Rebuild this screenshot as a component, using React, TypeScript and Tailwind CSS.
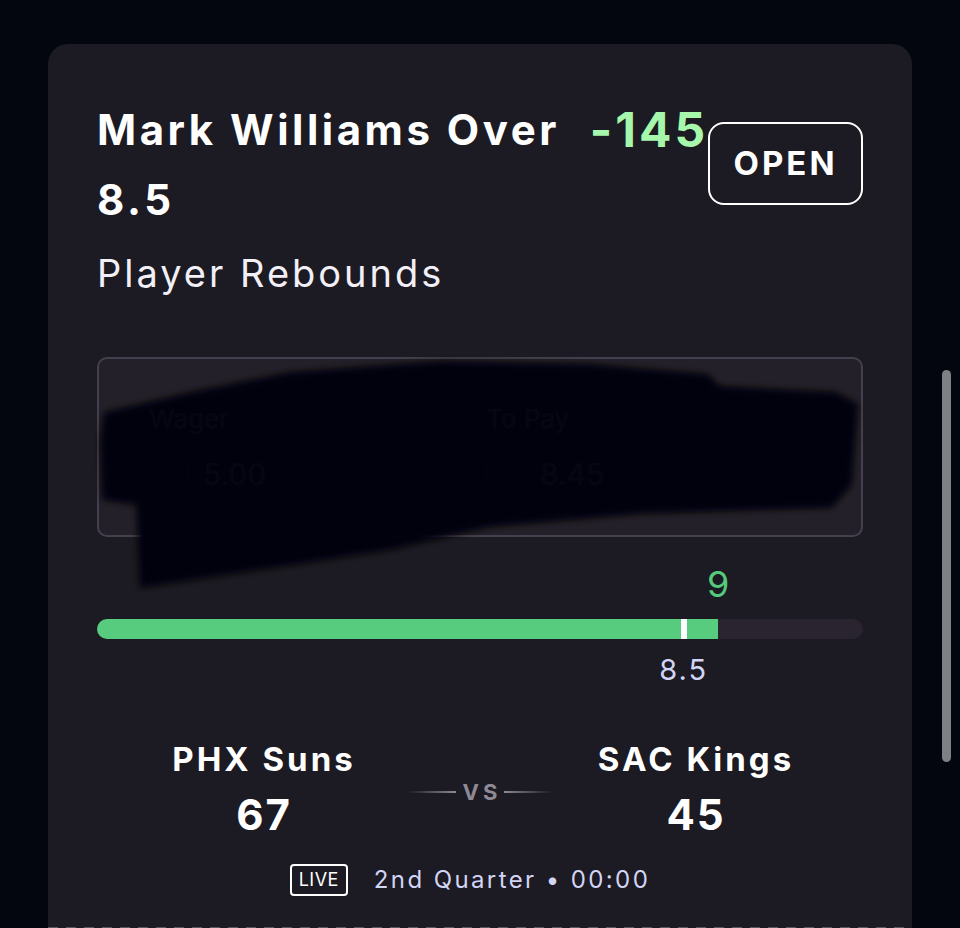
import React from "react"

const font = { fontFamily: "Inter, 'Noto Sans', sans-serif" }

type Team = { name: string; score: number }

const home: Team = { name: "PHX Suns", score: 67 }
const away: Team = { name: "SAC Kings", score: 45 }

const current = 9
const line = 8.5
const fillPct = 81.1
const linePct = 76.6

function TeamCol({ team }: { team: Team }) {
  return (
    <div className="flex flex-col items-center">
      <div className="text-[33px] leading-none font-bold text-white tracking-[3px]">{team.name}</div>
      <div className="mt-[18px] text-[42px] leading-none font-bold text-white tracking-[2px]">{team.score}</div>
    </div>
  )
}

function Scribble() {
  // redaction mark drawn over the wager box
  return (
    <svg
      className="absolute left-0 top-0 w-[960px] h-[928px] pointer-events-none"
      viewBox="0 0 960 928"
    >
      <defs>
        <filter id="soft" x="-10%" y="-10%" width="120%" height="120%">
          <feGaussianBlur stdDeviation="3" />
        </filter>
      </defs>
      <polygon
        filter="url(#soft)"
        fill="#050407"
        fillOpacity="0.96"
        points="104,412 200,390 290,372 440,361 590,364 708,374 720,386 836,392 858,404 852,485 832,508 640,514 490,527 390,550 240,573 140,588 136,505 102,500 100,440"
      />
    </svg>
  )
}

export default function App() {
  return (
    <div className="relative h-[928px] overflow-hidden bg-[#03060f] px-12 pt-[44px]" style={font}>
      <div className="w-[864px] min-h-[1000px] rounded-[20px] bg-[#1c1a22] px-[49px] pt-[51px]">
        {/* header */}
        <div className="flex items-center">
          <h1 className="text-[42px] leading-[70px] font-bold text-white whitespace-nowrap tracking-[3.5px]">
            Mark Williams Over
            <br />
            {line}
          </h1>
          <div className="ml-[30px] self-start text-[48px] leading-[70px] font-bold tracking-[3px] text-[#a6f7ab]">
            -145
          </div>
          <button className="ml-auto -mt-[3px] h-[83px] w-[157px] rounded-[16px] border-[2.5px] border-white text-[33px] font-bold tracking-[3px] text-white">
            OPEN
          </button>
        </div>
        <div className="mt-[16px] text-[38px] leading-[1.2] tracking-[3px] text-[#f2f0f6]">Player Rebounds</div>

        {/* wager box */}
        <div className="mt-[60px] h-[180px] rounded-[10px] border-2 border-[#45404f] bg-[#242029] pl-[50px] pt-[40px]">
          <div className="grid grid-cols-[337px_1fr]">
            <div className="text-[26px] text-[#a29eaa]">Wager</div>
            <div className="text-[26px] text-[#a29eaa]">To Pay</div>
            <div className="mt-[14px] flex items-center gap-[14px]">
              <div className="h-[26px] w-[40px] rounded-[4px] border-2 border-[#3a3542]" />
              <span className="text-[30px] text-[#8e8a96]">5.00</span>
            </div>
            <div className="mt-[14px] flex items-center gap-[14px]">
              <div className="h-[26px] w-[40px] rounded-[4px] border-2 border-[#3a3542]" />
              <span className="text-[30px] text-[#8e8a96]">8.45</span>
            </div>
          </div>
        </div>

        {/* progress */}
        <div className="relative mt-[29px] h-[36px]">
          <div
            className="absolute top-0 -translate-x-1/2 text-[36px] leading-none text-[#55ca7c]"
            style={{ left: `${fillPct}%` }}
          >
            {current}
          </div>
        </div>
        <div className="relative mt-[17px] h-[20px] rounded-full bg-[#29242f]">
          <div className="h-full rounded-l-full bg-[#57cc7f]" style={{ width: `${fillPct}%` }} />
          <div
            className="absolute top-0 h-full w-[6px] -translate-x-1/2 bg-white"
            style={{ left: `${linePct}%` }}
          />
        </div>
        <div className="relative mt-[16px] h-[29px]">
          <div
            className="absolute top-0 -translate-x-1/2 text-[29px] leading-none tracking-[2px] text-[#d3d5f5]"
            style={{ left: `${linePct}%` }}
          >
            {line}
          </div>
        </div>

        {/* matchup */}
        <div className="mt-[59px] grid grid-cols-[334px_98px_334px]">
          <TeamCol team={home} />
          <div className="mt-[38px] flex self-start justify-center">
            <div className="flex flex-none items-center gap-[3px]">
              <div className="h-[2px] w-[48px] bg-gradient-to-r from-transparent to-[#8d8995]" />
              <span className="text-[22px] leading-none font-bold tracking-[4px] pl-[4px] text-[#8d8995]">VS</span>
              <div className="h-[2px] w-[48px] bg-gradient-to-l from-transparent to-[#8d8995]" />
            </div>
          </div>
          <TeamCol team={away} />
        </div>

        <div className="mt-[28px] flex h-[32px] items-center justify-center gap-[26px] pr-[20px]">
          <div className="flex h-[32px] w-[58px] items-center justify-center rounded-[4px] border-2 border-white text-[18px] tracking-[0.5px] text-white">
            LIVE
          </div>
          <div className="text-[24px] leading-none tracking-[2.4px] text-[#d3d5f5]">2nd Quarter • 00:00</div>
        </div>

        <div className="-mx-[49px] mt-[31px] h-[3px] bg-[repeating-linear-gradient(90deg,#5b5664_0_10px,transparent_10px_18px)]" />
      </div>

      <Scribble />

      {/* overlay scrollbar */}
      <div className="absolute left-[942px] top-[370px] h-[392px] w-[9px] rounded-full bg-[#7e8086]" />
    </div>
  )
}
